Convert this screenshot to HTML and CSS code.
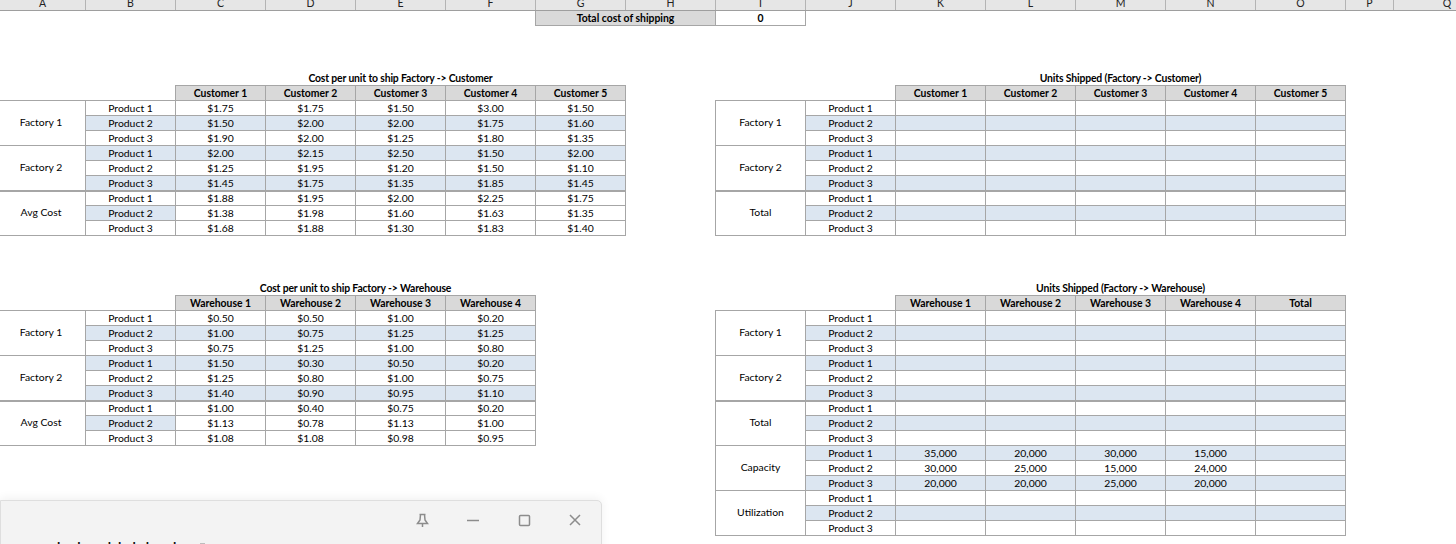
FILE: index.html
```html
<!DOCTYPE html>
<html lang="en">
<head>
<meta charset="utf-8">
<title>Shipping model</title>
<link rel="stylesheet" href="styles.css">
</head>
<body>
<div class="sheet">
  <div class="colhead">
    <div class="ch">A</div><div class="ch">B</div><div class="ch">C</div><div class="ch">D</div><div class="ch">E</div><div class="ch">F</div><div class="ch">G</div><div class="ch">H</div><div class="ch">I</div><div class="ch">J</div><div class="ch">K</div><div class="ch">L</div><div class="ch">M</div><div class="ch">N</div><div class="ch">O</div><div class="ch ch-p">P</div><div class="ch ch-q">Q</div>
  </div>
  <div class="totalrow">
    <div class="total-label">Total cost of shipping</div>
    <div class="total-value">0</div>
  </div>

  <div class="tables tables-first">
    <div class="slot">
      <table class="grid no-left">
        <tr class="title"><td class="blank" colspan="2"></td><td colspan="5">Cost per unit to ship Factory -&gt; Customer</td></tr>
        <tr class="head"><td class="blank" colspan="2"></td><th>Customer 1</th><th>Customer 2</th><th>Customer 3</th><th>Customer 4</th><th class="end">Customer 5</th></tr>
        <tr><td class="grp" rowspan="3">Factory 1</td><td>Product 1</td><td>$1.75</td><td>$1.75</td><td>$1.50</td><td>$3.00</td><td class="end">$1.50</td></tr>
        <tr class="band"><td>Product 2</td><td>$1.50</td><td>$2.00</td><td>$2.00</td><td>$1.75</td><td class="end">$1.60</td></tr>
        <tr><td>Product 3</td><td>$1.90</td><td>$2.00</td><td>$1.25</td><td>$1.80</td><td class="end">$1.35</td></tr>
        <tr class="band"><td class="grp" rowspan="3">Factory 2</td><td>Product 1</td><td>$2.00</td><td>$2.15</td><td>$2.50</td><td>$1.50</td><td class="end">$2.00</td></tr>
        <tr><td>Product 2</td><td>$1.25</td><td>$1.95</td><td>$1.20</td><td>$1.50</td><td class="end">$1.10</td></tr>
        <tr class="band"><td>Product 3</td><td>$1.45</td><td>$1.75</td><td>$1.35</td><td>$1.85</td><td class="end">$1.45</td></tr>
        <tr class="heavy"><td class="grp grp-last" rowspan="3">Avg Cost</td><td>Product 1</td><td>$1.88</td><td>$1.95</td><td>$2.00</td><td>$2.25</td><td class="end">$1.75</td></tr>
        <tr><td class="tint">Product 2</td><td>$1.38</td><td>$1.98</td><td>$1.60</td><td>$1.63</td><td class="end">$1.35</td></tr>
        <tr class="last"><td>Product 3</td><td>$1.68</td><td>$1.88</td><td>$1.30</td><td>$1.83</td><td class="end">$1.40</td></tr>
      </table>
    </div>
    <table class="grid">
      <tr class="title"><td class="blank" colspan="2"></td><td colspan="5">Units Shipped (Factory -&gt; Customer)</td></tr>
      <tr class="head"><td class="blank" colspan="2"></td><th>Customer 1</th><th>Customer 2</th><th>Customer 3</th><th>Customer 4</th><th class="end">Customer 5</th></tr>
      <tr><td class="grp" rowspan="3">Factory 1</td><td>Product 1</td><td></td><td></td><td></td><td></td><td class="end"></td></tr>
      <tr class="band"><td>Product 2</td><td></td><td></td><td></td><td></td><td class="end"></td></tr>
      <tr><td>Product 3</td><td></td><td></td><td></td><td></td><td class="end"></td></tr>
      <tr class="band"><td class="grp" rowspan="3">Factory 2</td><td>Product 1</td><td></td><td></td><td></td><td></td><td class="end"></td></tr>
      <tr><td>Product 2</td><td></td><td></td><td></td><td></td><td class="end"></td></tr>
      <tr class="band"><td>Product 3</td><td></td><td></td><td></td><td></td><td class="end"></td></tr>
      <tr class="heavy"><td class="grp grp-last" rowspan="3">Total</td><td>Product 1</td><td></td><td></td><td></td><td></td><td class="end"></td></tr>
      <tr class="band"><td>Product 2</td><td></td><td></td><td></td><td></td><td class="end"></td></tr>
      <tr class="last"><td>Product 3</td><td></td><td></td><td></td><td></td><td class="end"></td></tr>
    </table>
  </div>

  <div class="tables tables-second">
    <div class="slot">
      <table class="grid no-left">
        <tr class="title"><td class="blank" colspan="2"></td><td colspan="4">Cost per unit to ship Factory -&gt; Warehouse</td></tr>
        <tr class="head"><td class="blank" colspan="2"></td><th>Warehouse 1</th><th>Warehouse 2</th><th>Warehouse 3</th><th class="end">Warehouse 4</th></tr>
        <tr><td class="grp" rowspan="3">Factory 1</td><td>Product 1</td><td>$0.50</td><td>$0.50</td><td>$1.00</td><td class="end">$0.20</td></tr>
        <tr class="band"><td>Product 2</td><td>$1.00</td><td>$0.75</td><td>$1.25</td><td class="end">$1.25</td></tr>
        <tr><td>Product 3</td><td>$0.75</td><td>$1.25</td><td>$1.00</td><td class="end">$0.80</td></tr>
        <tr class="band"><td class="grp" rowspan="3">Factory 2</td><td>Product 1</td><td>$1.50</td><td>$0.30</td><td>$0.50</td><td class="end">$0.20</td></tr>
        <tr><td>Product 2</td><td>$1.25</td><td>$0.80</td><td>$1.00</td><td class="end">$0.75</td></tr>
        <tr class="band"><td>Product 3</td><td>$1.40</td><td>$0.90</td><td>$0.95</td><td class="end">$1.10</td></tr>
        <tr class="heavy"><td class="grp grp-last" rowspan="3">Avg Cost</td><td>Product 1</td><td>$1.00</td><td>$0.40</td><td>$0.75</td><td class="end">$0.20</td></tr>
        <tr><td class="tint">Product 2</td><td>$1.13</td><td>$0.78</td><td>$1.13</td><td class="end">$1.00</td></tr>
        <tr class="last"><td>Product 3</td><td>$1.08</td><td>$1.08</td><td>$0.98</td><td class="end">$0.95</td></tr>
      </table>
    </div>
    <table class="grid">
      <tr class="title"><td class="blank" colspan="2"></td><td colspan="5">Units Shipped (Factory -&gt; Warehouse)</td></tr>
      <tr class="head"><td class="blank" colspan="2"></td><th>Warehouse 1</th><th>Warehouse 2</th><th>Warehouse 3</th><th>Warehouse 4</th><th class="end">Total</th></tr>
      <tr><td class="grp" rowspan="3">Factory 1</td><td>Product 1</td><td></td><td></td><td></td><td></td><td class="end"></td></tr>
      <tr class="band"><td>Product 2</td><td></td><td></td><td></td><td></td><td class="end"></td></tr>
      <tr><td>Product 3</td><td></td><td></td><td></td><td></td><td class="end"></td></tr>
      <tr class="band"><td class="grp" rowspan="3">Factory 2</td><td>Product 1</td><td></td><td></td><td></td><td></td><td class="end"></td></tr>
      <tr><td>Product 2</td><td></td><td></td><td></td><td></td><td class="end"></td></tr>
      <tr class="band"><td>Product 3</td><td></td><td></td><td></td><td></td><td class="end"></td></tr>
      <tr class="heavy"><td class="grp grp-total" rowspan="3">Total</td><td>Product 1</td><td></td><td></td><td></td><td></td><td class="end"></td></tr>
      <tr class="band"><td>Product 2</td><td></td><td></td><td></td><td></td><td class="end"></td></tr>
      <tr><td>Product 3</td><td></td><td></td><td></td><td></td><td class="end"></td></tr>
      <tr class="band"><td class="grp" rowspan="3">Capacity</td><td>Product 1</td><td>35,000</td><td>20,000</td><td>30,000</td><td>15,000</td><td class="end"></td></tr>
      <tr><td>Product 2</td><td>30,000</td><td>25,000</td><td>15,000</td><td>24,000</td><td class="end"></td></tr>
      <tr class="band"><td>Product 3</td><td>20,000</td><td>20,000</td><td>25,000</td><td>20,000</td><td class="end"></td></tr>
      <tr><td class="grp grp-last" rowspan="3">Utilization</td><td>Product 1</td><td></td><td></td><td></td><td></td><td class="end"></td></tr>
      <tr class="band"><td>Product 2</td><td></td><td></td><td></td><td></td><td class="end"></td></tr>
      <tr class="last"><td>Product 3</td><td></td><td></td><td></td><td></td><td class="end"></td></tr>
    </table>
  </div>

  <div class="panel">
    <div class="winbtns">
      <svg class="ico" width="16" height="16" viewBox="0 0 16 16"><path d="M5.500 2.500h6M6.500 2.500L6 8 3.500 11.500h10L11 8l-.500-5.500M8.500 11.500V15"/></svg>
      <svg class="ico" width="16" height="16" viewBox="0 0 16 16"><path d="M2 8.500h12"/></svg>
      <svg class="ico" width="16" height="16" viewBox="0 0 16 16"><rect x="3.500" y="3.500" width="10" height="10" rx="1"/></svg>
      <svg class="ico" width="16" height="16" viewBox="0 0 16 16"><path d="M3 3l10 10M13 3L3 13"/></svg>
    </div>
    <div class="cut"><span>l</span><span>l</span><span>l</span><span>l</span><span>l</span><span>l</span><span>l</span></div>
    <div class="cut-mark"></div>
  </div>
</div>
</body>
</html>
```
FILE: styles.css
```css
* { box-sizing: border-box; }
html, body { margin: 0; padding: 0; background: #fff; }
body { width: 1456px; height: 544px; overflow: hidden; position: relative; }
.sheet { font-family: "Lato", "Liberation Sans", sans-serif; font-size: 10.4px; color: #000; width: 1456px; height: 544px; overflow: hidden; position: relative; }

.colhead { display: flex; height: 11px; background: #e6e6e6; border-bottom: 1px solid #9e9e9e; overflow: hidden; }
.ch { flex: 0 0 90px; border-left: 1px solid #b4b4b4; text-align: center; line-height: 7px; font-size: 10.5px; color: #222; }
.ch:first-child { flex-basis: 85px; border-left: 0; }
.ch-p { flex-basis: 48px; }
.ch-q { flex-basis: 107px; }

.totalrow { display: flex; margin-left: 535px; height: 15px; font-weight: 700; text-align: center; line-height: 15px; }
.total-label { width: 180px; background: #d9d9d9; border: 1px solid #a6a6a6; border-top: 0; border-right: 0; }
.total-value { width: 91px; border: 1px solid #a6a6a6; border-top: 0; }

.tables { display: flex; }
.tables-first { margin-top: 44px; }
.tables-second { margin-top: 44px; }
.slot { flex: 0 0 715px; }

.grid { border-collapse: separate; border-spacing: 0; table-layout: fixed; }
.grid tr { height: 15px; }
.grid td, .grid th { height: 15px; width: 90px; padding: 0; text-align: center; vertical-align: middle; line-height: 13px; font-weight: 400; border-top: 1px solid #a6a6a6; border-left: 1px solid #a6a6a6; white-space: nowrap; overflow: hidden; }
.grid .end { border-right: 1px solid #a6a6a6; width: 91px; }
.grid .grp { width: 90px; padding-bottom: 1px; }
.no-left .grp { width: 85px; border-left: 0; padding-right: 3px; }
.grid .blank { border: 0; }
.grid .title td { border: 0; font-weight: 700; line-height: 14px; padding-top: 1px; letter-spacing: -0.15px; }
.grid .head th { background: #d9d9d9; font-weight: 700; }
.grid .band td:not(.grp), .grid .tint { background: #dce6f1; }
.grid .heavy td { border-top: 2px solid #a6a6a6; }
.grid .last td { border-bottom: 1px solid #a6a6a6; height: 16px; }
.grid .grp-last { border-bottom: 1px solid #a6a6a6; padding-bottom: 2px; }
.grid .grp-total { padding-bottom: 2px; }

.panel { position: absolute; left: 0; top: 500px; width: 602px; height: 60px; background: #f3f3f3; border: 1px solid #dedede; border-radius: 0 5px 0 0; box-shadow: 0 -2px 10px rgba(0,0,0,.06); }
.winbtns { display: flex; gap: 35px; position: absolute; left: 413px; top: 11px; }
.ico { fill: none; stroke: #8c8c8c; stroke-width: 1.5; display: block; }
.cut { display: flex; position: absolute; left: 56px; top: 39px; font-family: "Liberation Sans", sans-serif; font-weight: 700; font-size: 12px; line-height: 14px; color: #111; }
.cut span:nth-child(2) { margin-left: 17px; }
.cut span:nth-child(3) { margin-left: 27px; }
.cut span:nth-child(4) { margin-left: 7px; }
.cut span:nth-child(5) { margin-left: 11px; }
.cut span:nth-child(6) { margin-left: 10px; }
.cut span:nth-child(7) { margin-left: 24px; }
.cut-mark { position: absolute; left: 199px; top: 42px; width: 5px; height: 2px; background: #bdbdbd; }
```
